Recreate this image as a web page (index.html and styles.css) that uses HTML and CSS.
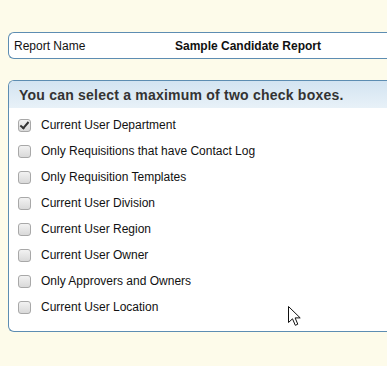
FILE: index.html
```html
<!DOCTYPE html>
<html lang="en">

<head>
    <meta charset="UTF-8">
    <title>Report Options</title>
    <link rel="stylesheet" href="styles.css">
</head>

<body>
    <div class="page">
        <div class="report-box">
            <span class="report-label">Report Name</span>
            <span class="report-value">Sample Candidate Report</span>
        </div>

        <div class="panel">
            <div class="panel-header">You can select a maximum of two check boxes.</div>
            <div class="panel-body">
                <label class="option"><span class="box checked"></span>Current User Department</label>
                <label class="option"><span class="box"></span>Only Requisitions that have Contact Log</label>
                <label class="option"><span class="box"></span>Only Requisition Templates</label>
                <label class="option"><span class="box"></span>Current User Division</label>
                <label class="option"><span class="box"></span>Current User Region</label>
                <label class="option"><span class="box"></span>Current User Owner</label>
                <label class="option"><span class="box"></span>Only Approvers and Owners</label>
                <label class="option"><span class="box"></span>Current User Location</label>
            </div>
        </div>
    </div>

    <svg class="cursor" width="14" height="22" viewBox="0 0 14 22">
        <path d="M0.5 0.5 L0.5 16.5 L4.5 12.8 L7.3 19.3 L9.8 18.2 L7.1 11.9 L12.2 11.9 Z" fill="#fff" stroke="#111" stroke-width="1" stroke-linejoin="miter"/>
    </svg>
</body>

</html>
```

FILE: styles.css
```css
body {
    margin: 0;
    padding: 0;
    background: #fdfbea;
    font-family: "Liberation Sans", Arial, sans-serif;
    font-size: 12px;
    color: #111;
    overflow: hidden;
    height: 366px;
    position: relative;
}

.page {
    padding: 32px 0 0 8px;
}

/* boxes run on past the right edge of the window, so no right border */
.report-box {
    display: flex;
    align-items: center;
    height: 25px;
    background: #fff;
    border: 1px solid #5d8db2;
    border-right: none;
    border-radius: 6px 0 0 6px;
    padding-left: 5px;
}

.report-label {
    width: 161px;
}

.report-value {
    font-weight: bold;
}

.panel {
    margin-top: 21px;
    background: #fff;
    border: 1px solid #5d8db2;
    border-right: none;
    border-radius: 6px 0 0 6px;
    overflow: hidden;
}

.panel-header {
    height: 27px;
    line-height: 28px;
    padding-left: 10px;
    background: linear-gradient(to bottom, #d3e4f1, #e8f1f8);
    font-size: 14px;
    font-weight: bold;
    color: #333;
    letter-spacing: 0.22px;
    white-space: nowrap;
}

.panel-body {
    padding: 4px 0 11px 9px;
}

.option {
    display: flex;
    align-items: center;
    height: 26px;
}

.box {
    width: 11px;
    height: 11px;
    border: 1px solid #a8a8a8;
    border-radius: 3px;
    background: linear-gradient(to bottom, #f2f2f2, #d9d9d9);
    margin-right: 10px;
    position: relative;
}

.box.checked::after {
    content: "";
    position: absolute;
    left: 3px;
    top: 0px;
    width: 3px;
    height: 7px;
    border: solid #333;
    border-width: 0 2px 2px 0;
    transform: rotate(40deg);
}

.cursor {
    position: absolute;
    left: 288px;
    top: 306px;
}
```
